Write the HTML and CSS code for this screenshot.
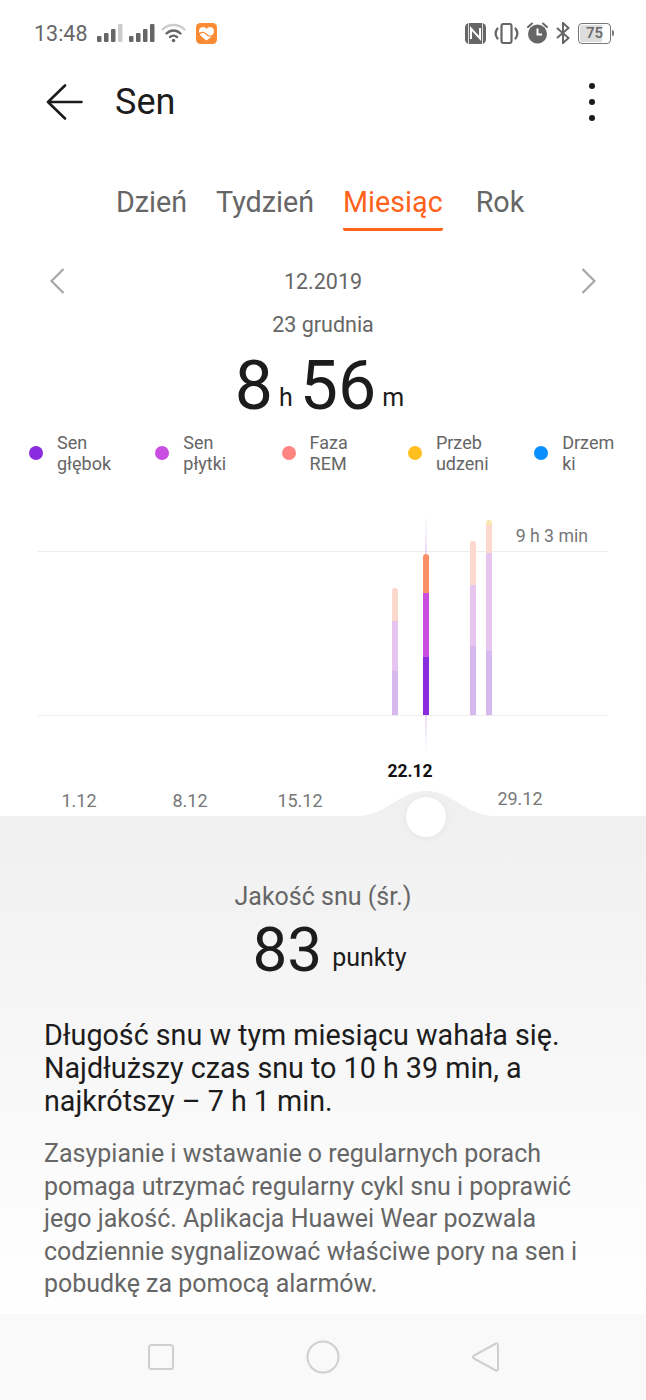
FILE: index.html
```html
<!DOCTYPE html>
<html lang="pl">
<head>
  <meta charset="UTF-8" />
  <meta name="viewport" content="width=device-width, initial-scale=1.0" />
  <title>Sen</title>
  <link rel="stylesheet" href="styles.css">
</head>
<body>
  <div class="statusbar">
    <div class="status-left">
      <span class="clock">13:48</span>
      <svg class="ic-signal" width="26" height="18" viewBox="0 0 26 18">
        <rect x="0" y="12" width="4.5" height="6" rx="1" fill="#666"/>
        <rect x="7" y="9" width="4.5" height="9" rx="1" fill="#666"/>
        <rect x="14" y="5" width="4.5" height="13" rx="1" fill="#666"/>
        <rect x="21" y="0" width="4.5" height="18" rx="1" fill="#ccc"/>
      </svg>
      <svg class="ic-signal" width="26" height="18" viewBox="0 0 26 18">
        <rect x="0" y="12" width="4.5" height="6" rx="1" fill="#666"/>
        <rect x="7" y="9" width="4.5" height="9" rx="1" fill="#666"/>
        <rect x="14" y="5" width="4.5" height="13" rx="1" fill="#666"/>
        <rect x="21" y="0" width="4.5" height="18" rx="1" fill="#666"/>
      </svg>
      <svg class="ic-wifi" width="25" height="20" viewBox="0 0 25 20" fill="none" stroke-linecap="round">
        <path d="M1.5 6.5C7.5 .5 17.5 .5 23.5 6.5" stroke="#ccc" stroke-width="2.4"/>
        <path d="M5.5 10.5C9.5 6.5 15.5 6.5 19.5 10.5" stroke="#666" stroke-width="2.4"/>
        <path d="M9 14C11 12.2 14 12.2 16 14" stroke="#666" stroke-width="2.4"/>
        <circle cx="12.5" cy="17.5" r="1.8" fill="#666"/>
      </svg>
      <svg class="ic-app" width="21" height="21" viewBox="0 0 21 21">
        <rect width="21" height="21" rx="4.5" fill="#fb8a35"/>
        <path d="M10.5 17.5C6 14.5 3 11.5 3 8C3 5.5 5 4 7 4C8.500 4 9.800 4.800 10.500 6C11.200 4.800 12.500 4 14 4C16 4 18 5.500 18 8C18 11.500 15 14.500 10.500 17.500Z" fill="#fff"/>
        <path d="M0 11.500C3 11.500 5 9 7.500 9.500C10 10 11 13 13.500 13C16 13 18 11.500 21 12" stroke="#fb8a35" stroke-width="1.200" fill="none"/>
      </svg>
    </div>
    <div class="status-right">
      <svg width="21" height="21" viewBox="0 0 21 21">
        <rect width="21" height="21" rx="4.500" fill="#666"/>
        <path d="M6 16V5.500L15 15.500V5" stroke="#fff" stroke-width="2" fill="none"/>
        <path d="M3.500 0V21M17.500 0V21" stroke="#fff" stroke-width="0.800" fill="none"/>
      </svg>
      <svg width="25" height="21" viewBox="0 0 25 21" fill="none" stroke="#666" stroke-width="2.200">
        <rect x="7.500" y="1" width="10" height="19" rx="2"/>
        <path d="M3.500 5.500C1.200 8.500 1.200 12.500 3.500 15.500M21.500 5.500C23.800 8.500 23.800 12.500 21.500 15.500" stroke-linecap="round"/>
      </svg>
      <svg width="21" height="22" viewBox="0 0 21 22">
        <circle cx="10.500" cy="12" r="9.500" fill="#666"/>
        <path d="M10.500 6.500V12.500H15" stroke="#fff" stroke-width="2" fill="none"/>
        <path d="M1 5L5 1.500M20 5L16 1.500" stroke="#666" stroke-width="2" stroke-linecap="round"/>
      </svg>
      <svg width="14" height="22" viewBox="0 0 14 22" fill="none" stroke="#666" stroke-width="2">
        <path d="M1 6L12.500 16L7 21V1L12.500 6L1 16"/>
      </svg>
      <div class="battery"><span class="battery-num">75</span></div>
    </div>
  </div>

  <div class="toolbar">
    <div class="toolbar-left">
      <svg width="37" height="36" viewBox="0 0 37 36" fill="none" stroke="#1c1c1c" stroke-width="2.600" stroke-linecap="round" stroke-linejoin="round">
        <path d="M19 1.500L2 18L19 34.500M2 18H35.500"/>
      </svg>
      <h1 class="title">Sen</h1>
    </div>
    <div class="more"><i></i><i></i><i></i></div>
  </div>

  <div class="tabs">
    <div class="tab">Dzień</div>
    <div class="tab">Tydzień</div>
    <div class="tab active">Miesiąc</div>
    <div class="tab tab-last">Rok</div>
  </div>

  <div class="datenav">
    <svg width="15" height="26" viewBox="0 0 15 26" fill="none" stroke="#a6a6a6" stroke-width="2.200"><path d="M13.500 1L1.500 13L13.500 25"/></svg>
    <span>12.2019</span>
    <svg width="15" height="26" viewBox="0 0 15 26" fill="none" stroke="#a6a6a6" stroke-width="2.200"><path d="M1.500 1L13.500 13L1.500 25"/></svg>
  </div>
  <div class="day">23 grudnia</div>
  <div class="duration"><span class="big">8</span><span class="unit">h</span><span class="big">56</span><span class="unit">m</span></div>

  <div class="legend">
    <div class="legend-item"><i class="dot deep"></i><span>Sen<br>głębok</span></div>
    <div class="legend-item"><i class="dot light"></i><span>Sen<br>płytki</span></div>
    <div class="legend-item"><i class="dot rem"></i><span>Faza<br>REM</span></div>
    <div class="legend-item"><i class="dot awake"></i><span>Przeb<br>udzeni</span></div>
    <div class="legend-item"><i class="dot nap"></i><span>Drzem<br>ki</span></div>
  </div>

  <svg class="chart" width="646" height="306" viewBox="0 510 646 306">
    <defs>
      <linearGradient id="guide" x1="0" y1="0" x2="0" y2="1">
        <stop offset="0" stop-color="#8a2be0" stop-opacity="0"/>
        <stop offset="0.15" stop-color="#8a2be0" stop-opacity="0.3"/>
        <stop offset="0.85" stop-color="#8a2be0" stop-opacity="0.3"/>
        <stop offset="1" stop-color="#8a2be0" stop-opacity="0"/>
      </linearGradient>
    </defs>
    <rect x="38" y="551" width="570" height="1" fill="#ececec"/>
    <rect x="38" y="715" width="570" height="1" fill="#ececec"/>
    <rect x="425.500" y="514" width="1" height="240" fill="url(#guide)"/>

    <rect x="392" y="588" width="6" height="60" rx="3" fill="#fbd9cc"/>
    <rect x="392" y="621" width="6" height="50" fill="#e8c4f0"/>
    <rect x="392" y="671" width="6" height="44" fill="#d6b8ee"/>

    <rect x="423" y="554" width="6" height="60" rx="3" fill="#ff8f66"/>
    <rect x="423" y="593" width="6" height="64" fill="#c84fe0"/>
    <rect x="423" y="657" width="6" height="58" fill="#8a2be0"/>

    <rect x="470" y="541" width="6" height="60" rx="3" fill="#fbd9cc"/>
    <rect x="470" y="585" width="6" height="61" fill="#e8c4f0"/>
    <rect x="470" y="646" width="6" height="69" fill="#d6b8ee"/>

    <rect x="486" y="520" width="6" height="20" rx="3" fill="#f9e6b0"/>
    <rect x="486" y="525" width="6" height="30" fill="#fbd9cc"/>
    <rect x="486" y="553" width="6" height="98" fill="#e8c4f0"/>
    <rect x="486" y="651" width="6" height="64" fill="#d6b8ee"/>

    <text class="chart-max" x="588" y="542" text-anchor="end">9 h 3 min</text>
    <text class="chart-sel" x="410" y="777" text-anchor="middle">22.12</text>
    <text class="chart-tick" x="79" y="807" text-anchor="middle">1.12</text>
    <text class="chart-tick" x="190" y="807" text-anchor="middle">8.12</text>
    <text class="chart-tick" x="300" y="807" text-anchor="middle">15.12</text>
    <text class="chart-tick" x="520" y="805" text-anchor="middle">29.12</text>
  </svg>

  <div class="sheet">
    <svg class="bump" width="140" height="27" viewBox="0 0 140 27">
      <path d="M0 26C32 26 42 1 70 1C98 1 108 26 140 26V27H0Z" fill="#f0f0f0"/>
    </svg>
    <div class="handle"></div>
    <div class="score-label">Jakość snu (śr.)</div>
    <div class="score"><span class="score-num">83</span><span class="score-unit">punkty</span></div>
    <p class="summary">Długość snu w tym miesiącu wahała się. Najdłuższy czas snu to 10 h 39 min, a najkrótszy – 7 h 1 min.</p>
    <p class="advice">Zasypianie i wstawanie o regularnych porach pomaga utrzymać regularny cykl snu i poprawić jego jakość. Aplikacja Huawei Wear pozwala codziennie sygnalizować właściwe pory na sen i pobudkę za pomocą alarmów.</p>
  </div>

  <div class="navbar">
    <svg width="28" height="28" viewBox="0 0 28 28" fill="none" stroke="#cfcfcf" stroke-width="2"><rect x="2" y="2" width="24" height="24" rx="2.500"/></svg>
    <svg width="34" height="34" viewBox="0 0 34 34" fill="none" stroke="#cfcfcf" stroke-width="2"><circle cx="17" cy="17" r="15.500"/></svg>
    <svg width="28" height="32" viewBox="0 0 28 32" fill="none" stroke="#cfcfcf" stroke-width="2" stroke-linejoin="round"><path d="M25 2.500C26 2 27 2.500 27 4V28C27 29.500 26 30 25 29.500L3 17.500C1.500 16.500 1.500 15.500 3 14.500Z"/></svg>
  </div>
</body>
</html>
```

FILE: styles.css
```css
html, body {
  margin: 0;
  padding: 0;
}
body {
  width: 646px;
  height: 1400px;
  overflow: hidden;
  background-color: #fff;
  font-family: Roboto, sans-serif;
  color: #666;
}
.statusbar {
  height: 66px;
  padding: 0 34px 0 34px;
  display: flex;
  align-items: center;
  justify-content: space-between;
}
.status-left {
  display: flex;
  align-items: center;
  gap: 6px;
}
.clock {
  font-size: 21.500px;
  margin-right: 3px;
  color: #666;
}
.ic-app {
  margin-left: 4px;
}
.status-right {
  display: flex;
  align-items: center;
  gap: 8px;
}
.battery {
  width: 29px;
  height: 17px;
  border: 1.500px solid #777;
  border-radius: 4px;
  margin-right: 1px;
  position: relative;
  background: linear-gradient(to right, #ddd 75%, #fff 75%);
  background-clip: content-box;
  padding: 1px;
  box-sizing: content-box;
  display: flex;
  align-items: center;
  justify-content: center;
}
.battery::after {
  content: "";
  position: absolute;
  right: -4px;
  top: 6px;
  width: 2px;
  height: 6px;
  background-color: #777;
  border-radius: 0 2px 2px 0;
}
.battery-num {
  font-size: 15px;
  font-weight: 500;
  color: #666;
}
.toolbar {
  height: 72px;
  padding: 0 51px 0 46px;
  display: flex;
  align-items: center;
  justify-content: space-between;
}
.toolbar-left {
  display: flex;
  align-items: center;
  gap: 32px;
}
.title {
  margin: 0;
  font-size: 36px;
  font-weight: 400;
  color: #1c1c1c;
}
.more {
  display: flex;
  flex-direction: column;
  gap: 10px;
}
.more i {
  display: block;
  width: 6px;
  height: 6px;
  border-radius: 50%;
  background-color: #1c1c1c;
}
.tabs {
  margin-top: 32px;
  padding-left: 116px;
  display: flex;
  gap: 29px;
}
.tab {
  font-size: 28.700px;
  padding-top: 4px;
  line-height: 57px;
  height: 61px;
  box-sizing: border-box;
  color: #666;
}
.tab-last {
  margin-left: 4px;
}
.tab.active {
  color: #ff6319;
  border-bottom: 3px solid #ff6319;
  border-radius: 0 0 2px 2px;
}
.datenav {
  margin-top: 31px;
  height: 38px;
  padding: 0 50px;
  display: flex;
  align-items: center;
  justify-content: space-between;
  font-size: 21.500px;
}
.day {
  margin-top: 10px;
  height: 30px;
  line-height: 30px;
  text-align: center;
  font-size: 21.500px;
}
.duration {
  margin-top: 8px;
  height: 76px;
  line-height: 76px;
  text-align: center;
  color: #1c1c1c;
}
.big {
  font-size: 68px;
}
.unit {
  font-size: 25px;
  margin: 0 7px 0 6px;
  vertical-align: 3px;
}
.legend {
  margin-top: 8px;
  height: 42px;
  padding-left: 29px;
  display: flex;
}
.legend-item {
  flex: none;
  width: 126.300px;
  display: flex;
  align-items: center;
  gap: 14px;
  font-size: 18px;
  line-height: 21px;
}
.dot {
  width: 14px;
  height: 14px;
  border-radius: 50%;
}
.deep { background-color: #8a2be0; }
.light { background-color: #c84fe0; }
.rem { background-color: #ff8583; }
.awake { background-color: #ffc01f; }
.nap { background-color: #0a8fff; }
.chart {
  display: block;
  margin-top: 36px;
  font-family: Roboto, sans-serif;
}
.chart-max {
  font-size: 17.700px;
  fill: #777;
}
.chart-sel {
  font-size: 17.500px;
  font-weight: 700;
  fill: #111;
}
.chart-tick {
  font-size: 18px;
  fill: #777;
}
.sheet {
  position: relative;
  height: 498px;
  box-sizing: border-box;
  padding: 66px 44px 0;
  background: linear-gradient(to bottom, #f0f0f0, #fff);
}
.bump {
  position: absolute;
  left: 356px;
  top: -26px;
}
.handle {
  position: absolute;
  left: 406px;
  top: -19px;
  width: 40px;
  height: 40px;
  border-radius: 50%;
  background-color: #fff;
  box-shadow: 0 1px 6px rgba(0, 0, 0, 0.06);
}
.score-label {
  text-align: center;
  font-size: 25px;
  line-height: 30px;
}
.score {
  margin-top: 3px;
  padding-left: 13px;
  text-align: center;
  color: #1c1c1c;
  line-height: 70px;
}
.score-num {
  font-size: 62px;
}
.score-unit {
  font-size: 25px;
  margin-left: 10px;
  vertical-align: 5px;
}
.summary {
  margin: 18px 0 0;
  font-size: 28.700px;
  line-height: 33px;
  color: #1c1c1c;
}
.advice {
  margin: 20px 0 0;
  font-size: 25px;
  line-height: 32.600px;
  color: #666;
}
.navbar {
  height: 86px;
  padding: 0 147px 0 147px;
  display: flex;
  align-items: center;
  justify-content: space-between;
  background-color: #f9f9f9;
}
```
